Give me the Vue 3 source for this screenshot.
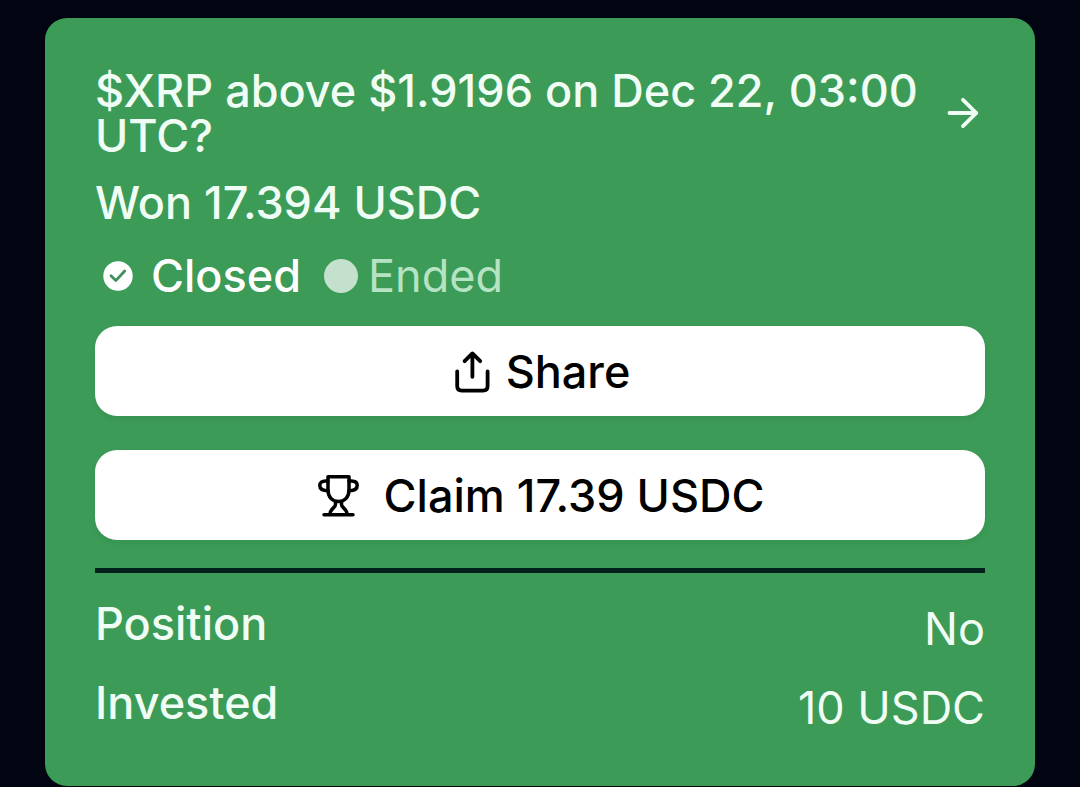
<script setup>
const details = [
  { label: 'Position', value: 'No' },
  { label: 'Invested', value: '10 USDC' },
]
</script>

<template>
  <main class="page">
    <article class="card">
      <header class="head">
        <h1 class="title">$XRP above $1.9196 on Dec 22, 03:00 UTC?</h1>
        <a class="open" href="#" aria-label="Open market">
          <svg class="icon" viewBox="0 0 45 45" stroke-width="3.8" aria-hidden="true">
            <path d="M9.5 22H36.3M23 8.8L36.3 22L23 35.2" />
          </svg>
        </a>
      </header>

      <p class="result">Won 17.394 USDC</p>

      <div class="status">
        <span class="closed">
          <svg class="check" viewBox="0 0 30 30" aria-hidden="true">
            <circle cx="15" cy="15" r="14.7" fill="currentColor" />
            <path d="M8 14.8L12.8 19.6L21.7 10" fill="none" stroke="#3f8f5b" stroke-width="2.8" stroke-linecap="round" stroke-linejoin="round" />
          </svg>
          Closed
        </span>
        <span class="ended"><span class="dot"></span>Ended</span>
      </div>

      <div class="actions">
        <button class="action share" type="button">
          <svg class="icon" viewBox="0 0 45 45" stroke-width="3.8" aria-hidden="true">
            <path d="M22.4 27.8V4.6M14.6 12.2L22.4 4.4L30.2 12.2" />
            <path d="M7.2 22.5V37Q7.2 41.6 11.8 41.6H33Q37.6 41.6 37.6 37V22.5" />
          </svg>
          Share
        </button>
        <button class="action claim" type="button">
          <svg class="icon" viewBox="0 0 45 45" stroke-width="3.5" aria-hidden="true">
            <path d="M12 3.8H33V17C33 24 28.8 28.5 22.5 28.5S12 24 12 17Z" />
            <path d="M12 8H9.5C6 8 3.8 9.5 3.8 12.6S6.5 17.8 12 17.8" />
            <path d="M33 8H35.5C39 8 41.2 9.5 41.2 12.6S38.5 17.8 33 17.8" />
            <path d="M19.5 29V31.5C19.5 35 14.2 35 13.8 41.5M25.5 29V31.5C25.5 35 30.8 35 31.2 41.5M8 41.8H37" />
          </svg>
          Claim 17.39 USDC
        </button>
      </div>

      <hr class="rule" />

      <dl class="details">
        <div v-for="item in details" :key="item.label" class="row">
          <dt>{{ item.label }}</dt>
          <dd>{{ item.value }}</dd>
        </div>
      </dl>
    </article>
  </main>
</template>

<style>
body {
  margin: 0;
  background: #020412;
}
</style>

<style scoped>
.page {
  padding: 18px 45px 0;
  font-family: Inter, "Liberation Sans", sans-serif;
  font-size: 45px;
  line-height: 45px;
  font-weight: 500;
  color: #f0fdf4;
}
.card {
  padding: 50px;
  border-radius: 22px;
  background: #3b9b57;
}
.icon {
  flex: none;
  width: 45px;
  height: 45px;
  fill: none;
  stroke: currentColor;
  stroke-linecap: round;
  stroke-linejoin: round;
}
.head {
  display: flex;
  align-items: center;
  justify-content: space-between;
  gap: 16px;
}
.title {
  margin: 0;
  font-size: inherit;
  font-weight: inherit;
}
.open {
  display: flex;
  flex: none;
  color: inherit;
}
.result {
  margin: 22px 0 28px;
}
.status {
  display: flex;
  align-items: center;
  gap: 23px;
}
.closed {
  display: flex;
  align-items: center;
  gap: 18px;
  padding-left: 8px;
  color: #ffffff;
}
.check {
  width: 30px;
  height: 30px;
}
.ended {
  display: flex;
  align-items: center;
  gap: 10px;
  font-weight: 400;
  color: #b5e3c3;
}
.dot {
  width: 34px;
  height: 34px;
  border-radius: 50%;
  background: #c4e1cd;
}
.actions {
  display: flex;
  flex-direction: column;
  gap: 34px;
  margin: 28px 0;
}
.action {
  display: flex;
  align-items: center;
  justify-content: center;
  height: 90px;
  padding: 0 24px;
  border: 0;
  border-radius: 22px;
  background: #ffffff;
  box-shadow: 0 3px 6px rgba(0, 0, 0, 0.05);
  color: #000000;
  font: inherit;
  cursor: pointer;
}
.share {
  gap: 11px;
}
.claim {
  gap: 23px;
}
.rule {
  height: 5px;
  margin: 0 0 28px;
  border: 0;
  background: #02201c;
}
.details {
  display: flex;
  flex-direction: column;
  gap: 23px;
  margin: 0;
}
.row {
  display: flex;
  align-items: flex-start;
  justify-content: space-between;
}
dd {
  margin: 0;
  line-height: 56px;
  font-weight: 400;
}
</style>
